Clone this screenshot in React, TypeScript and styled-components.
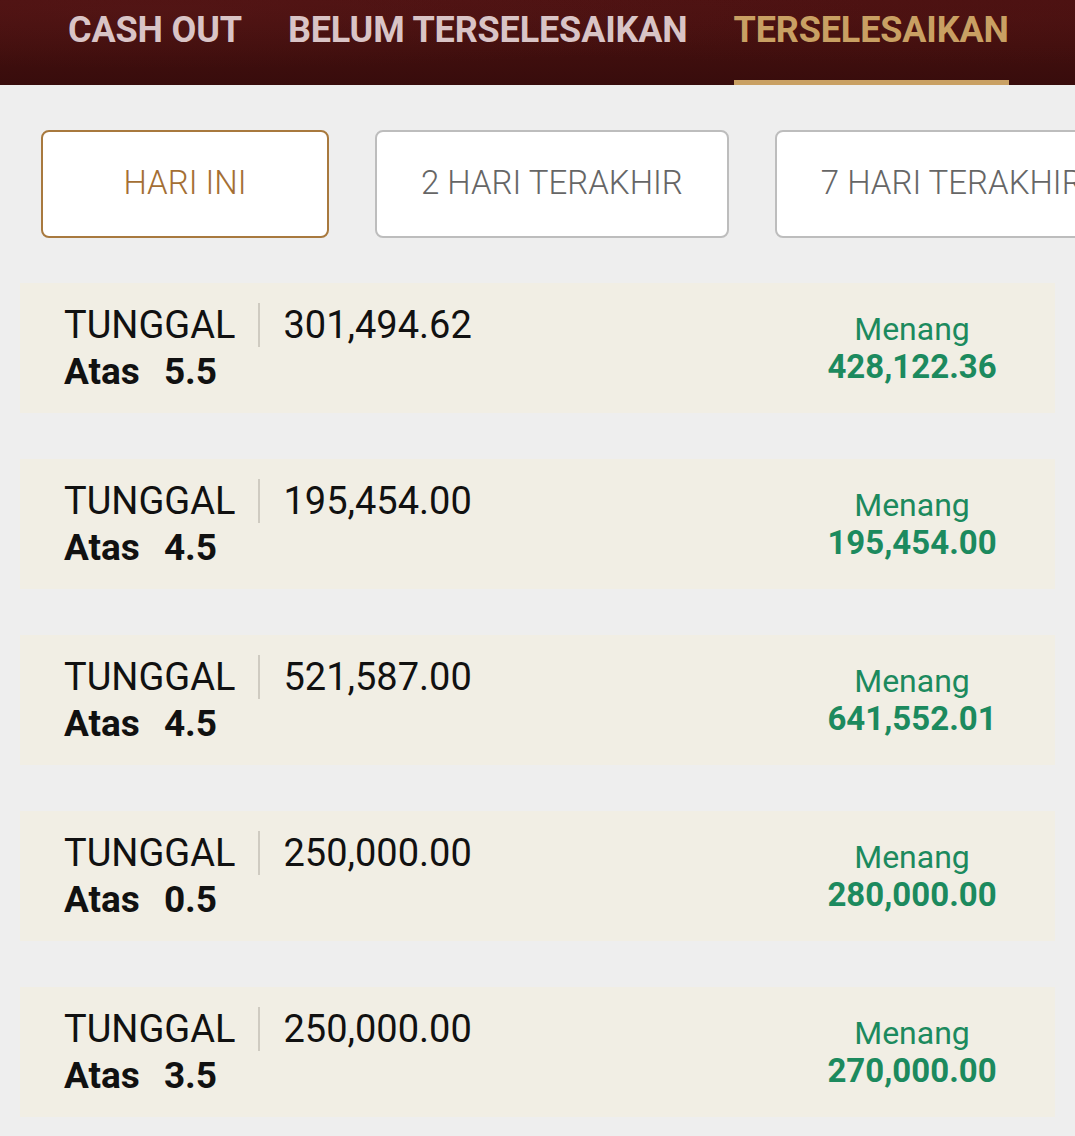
import React from "react";
import styled, { createGlobalStyle } from "styled-components";

const GlobalStyle = createGlobalStyle`
  html, body {
    margin: 0;
    padding: 0;
    background: #eeeeee;
    font-family: Roboto, "Liberation Sans", sans-serif;
  }
  * { box-sizing: border-box; }
`;

const Page = styled.div`
  width: 100%;
  min-height: 1136px;
  overflow: hidden;
  background: #eeeeee;
`;

const Header = styled.header`
  height: 85px;
  display: flex;
  gap: 46px;
  padding-left: 68px;
  background:
    radial-gradient(ellipse at 15% 10%, rgba(100, 28, 28, 0.35), transparent 55%),
    radial-gradient(ellipse at 90% 20%, rgba(90, 22, 22, 0.3), transparent 50%),
    linear-gradient(180deg, #4a1111 0%, #410f0e 55%, #380c0c 100%);
`;

const Tab = styled.div<{ $active?: boolean }>`
  height: 85px;
  padding-top: 8px;
  font-size: 36px;
  line-height: 44px;
  font-weight: 700;
  letter-spacing: -0.15px;
  white-space: nowrap;
  color: ${(p) => (p.$active ? "#c9a063" : "#d9c4c6")};
  border-bottom: 5px solid ${(p) => (p.$active ? "#c9a063" : "transparent")};
`;

const Filters = styled.div`
  display: flex;
  gap: 46px;
  padding: 45px 0 0 41px;
  white-space: nowrap;
`;

const FilterButton = styled.button<{ $active?: boolean }>`
  flex: none;
  height: 108px;
  min-width: 288px;
  padding: 0 44px 4px;
  border-radius: 8px;
  background: #ffffff;
  border: 2px solid ${(p) => (p.$active ? "#a8793e" : "#bdbdbd")};
  color: ${(p) => (p.$active ? "#a46f34" : "#666666")};
  font-family: Roboto, "Liberation Sans", sans-serif;
  font-size: 33px;
  font-weight: 300;
`;

const List = styled.div`
  display: flex;
  flex-direction: column;
  gap: 46px;
  padding: 45px 20px 0;
`;

const Card = styled.div`
  height: 130px;
  background: #f1eee4;
  display: flex;
  align-items: center;
  justify-content: space-between;
  padding-left: 44px;
  padding-right: 43px;
`;

const Left = styled.div`
  display: flex;
  flex-direction: column;
`;

const TopLine = styled.div`
  display: flex;
  align-items: center;
  height: 47px;
  font-size: 38px;
  color: #111111;
`;

const Divider = styled.span`
  width: 2px;
  height: 44px;
  background: #cfcbc1;
  margin: 0 23px;
`;

const BottomLine = styled.div`
  display: flex;
  align-items: center;
  gap: 24px;
  height: 47px;
  font-size: 37px;
  font-weight: 700;
  color: #111111;
`;

const Right = styled.div`
  width: 200px;
  display: flex;
  flex-direction: column;
  align-items: center;
  color: #1c8a5e;
`;

const Status = styled.div`
  font-size: 32px;
  line-height: 38px;
`;

const Payout = styled.div`
  font-size: 33px;
  line-height: 38px;
  font-weight: 700;
`;

const bets = [
  { stake: "301,494.62", line: "5.5", win: "428,122.36" },
  { stake: "195,454.00", line: "4.5", win: "195,454.00" },
  { stake: "521,587.00", line: "4.5", win: "641,552.01" },
  { stake: "250,000.00", line: "0.5", win: "280,000.00" },
  { stake: "250,000.00", line: "3.5", win: "270,000.00" },
];

export default function App() {
  return (
    <Page>
      <GlobalStyle />
      <Header>
        <Tab>CASH OUT</Tab>
        <Tab>BELUM TERSELESAIKAN</Tab>
        <Tab $active>TERSELESAIKAN</Tab>
      </Header>
      <Filters>
        <FilterButton $active>HARI INI</FilterButton>
        <FilterButton>2 HARI TERAKHIR</FilterButton>
        <FilterButton>7 HARI TERAKHIR</FilterButton>
      </Filters>
      <List>
        {bets.map((b, i) => (
          <Card key={i}>
            <Left>
              <TopLine>
                <span>TUNGGAL</span>
                <Divider />
                <span>{b.stake}</span>
              </TopLine>
              <BottomLine>
                <span>Atas</span>
                <span>{b.line}</span>
              </BottomLine>
            </Left>
            <Right>
              <Status>Menang</Status>
              <Payout>{b.win}</Payout>
            </Right>
          </Card>
        ))}
      </List>
    </Page>
  );
}
